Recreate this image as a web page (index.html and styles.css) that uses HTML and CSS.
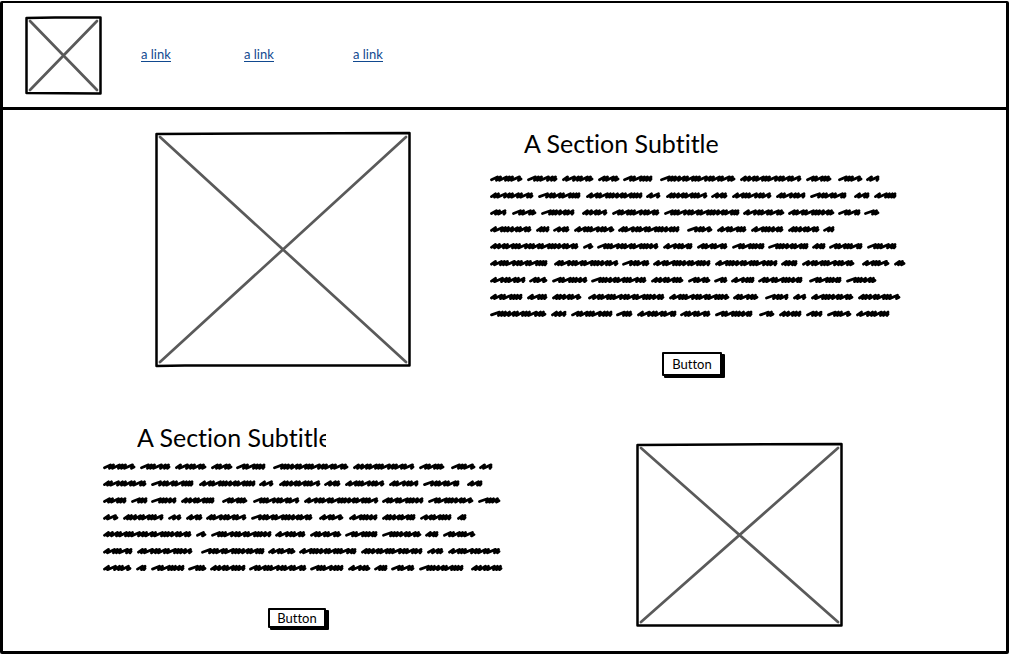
FILE: index.html
```html
<!DOCTYPE html>
<html lang="en">
<head>
<meta charset="utf-8">
<title>Wireframe</title>
<link rel="stylesheet" href="styles.css">
</head>
<body>
<div class="frame">
  <header class="header">
    <svg class="logo" viewBox="0 0 77 79" role="img" aria-label="Logo placeholder">
      <path class="box" d="M1.5 2 30 1.5 75.500 1.500 75.500 77.500 1.500 77Z"/>
      <path class="cross" d="M5 5 72 74M72 5 5 74"/>
    </svg>
    <nav class="nav">
      <a href="#">a link</a>
      <a href="#">a link</a>
      <a href="#">a link</a>
    </nav>
  </header>
  <main class="main">
    <section class="section section-first">
      <svg class="picture" viewBox="0 0 256 235" role="img" aria-label="Image placeholder">
        <path class="box" d="M1.500 2 110 1.500 254.500 1 254.500 233.500 30 233.500 1.500 234Z"/>
        <path class="cross" d="M5 5 251 230M251 5 5 230"/>
      </svg>
      <div class="copy">
        <h2 class="title">A Section Subtitle</h2>
        <svg class="scribble" viewBox="0 0 416 145" data-text="first" aria-hidden="true"></svg>
        <button class="button" type="button">Button</button>
      </div>
    </section>
    <section class="section section-second">
      <div class="copy">
        <h2 class="title title-cut">A Section Subtitle</h2>
        <svg class="scribble" viewBox="0 0 400 111" data-text="second" aria-hidden="true"></svg>
        <button class="button" type="button">Button</button>
      </div>
      <svg class="picture" viewBox="0 0 207 184" role="img" aria-label="Image placeholder">
        <path class="box" d="M1.500 2 90 1.500 205.500 1 205.500 182.500 1.500 182.500Z"/>
        <path class="cross" d="M5 5 202 179M202 5 5 179"/>
      </svg>
    </section>
  </main>
</div>
<script src="scribble.js"></script>
</body>
</html>
```

FILE: styles.css
```css
* { box-sizing: border-box; }

body {
  margin: 0;
  background: #fff;
  color: #000;
  font-family: Lato, "Open Sans", sans-serif;
  font-variant-ligatures: none;
}

.frame {
  display: flex;
  flex-direction: column;
  min-height: calc(100vh - 1px);
  margin: 1px 0 0;
  border: 3px solid #000;
  border-top-width: 2px;
  border-radius: 2px;
}

.header {
  display: flex;
  align-items: center;
  gap: 39px;
  padding: 13px 22px 12px;
  border-bottom: 3px solid #000;
}

.logo {
  display: block;
  width: 77px;
  height: 79px;
}

.nav {
  display: grid;
  grid-template-columns: 103px 109px auto;
  padding-bottom: 2px;
  font-size: 13px;
  line-height: 14px;
}

.nav a {
  justify-self: start;
  color: #11498f;
  text-decoration: none;
  border-bottom: 1px solid #11498f;
}

.box {
  fill: none;
  stroke: #000;
  stroke-width: 2.5;
  stroke-linejoin: round;
}

.cross {
  fill: none;
  stroke: #5a5a5a;
  stroke-width: 2.7;
  stroke-linecap: round;
}

.main {
  flex: 1;
  padding-top: 22px;
}

.section {
  display: grid;
  align-items: start;
}

.section-first { grid-template-columns: 152fr 256fr 79fr 416fr 100fr; }
.section-first .picture { grid-column: 2; }
.section-first .copy { grid-column: 4; }

.section-second {
  grid-template-columns: 100fr 400fr 133fr 207fr 163fr;
  padding-top: 49px;
}
.section-second .copy { grid-column: 2; }
.section-second .picture {
  grid-column: 4;
  margin-top: 18px;
}

.picture,
.scribble {
  display: block;
  width: 100%;
  overflow: visible;
}

.copy {
  display: flex;
  flex-direction: column;
}

.title {
  margin: 0 0 0 34px;
  font-size: 25px;
  line-height: 22px;
  font-weight: 400;
  white-space: nowrap;
}

.section-first .scribble { margin: 20px 0 33px; }
.section-second .scribble { margin: 13px 0 35px; }

.title-cut {
  width: 189px;
  line-height: 24px;
  overflow: hidden;
}

.squiggle {
  fill: none;
  stroke: #000;
  stroke-width: 2.8;
  stroke-linecap: round;
  stroke-linejoin: round;
}

.button {
  width: 60px;
  height: 24px;
  margin-left: 172px;
  padding: 0;
  border: 2px solid #000;
  border-radius: 1px;
  background: #fff;
  box-shadow: 2px 2px 0 #000, 3px 2px 0 #000;
  color: #000;
  font: inherit;
  font-size: 13px;
  line-height: 16px;
}

.section-second .button {
  width: 58px;
  height: 20px;
  margin-left: 165px;
}
```

FILE: scribble.js
```javascript
// Each line lists the start and end of every scribbled word.
const texts = {
  first: [
    [0,32,37,67,72,103,108,129,133,162,170,245,250,311,316,341,348,372,376,389],
    [0,43,48,90,96,152,156,170,176,217,221,237,242,281,286,315,320,356,364,379,384,406],
    [0,16,22,46,51,84,92,117,122,169,174,249,253,294,298,344,348,370,374,389],
    [0,41,46,59,63,79,84,124,128,189,197,222,227,256,261,293,298,329,333,344],
    [0,88,93,103,107,168,173,202,207,237,242,274,278,318,322,335,339,372,377,406],
    [0,57,64,128,132,159,163,220,225,287,291,307,312,364,372,399,404,415],
    [0,35,39,57,62,97,101,156,161,193,198,220,224,237,241,264,268,312,319,351,356,386],
    [0,32,37,57,62,91,98,174,179,239,243,268,275,298,303,316,321,363,368,410],
    [0,56,61,76,81,122,126,142,147,186,190,220,225,262,269,284,289,311,316,332,337,361,366,399]
  ],
  second: [
    [0,32,37,67,72,103,108,129,133,162,170,245,250,311,316,341,348,372,376,389],
    [0,43,48,90,96,152,156,170,176,217,221,237,242,281,286,315,320,356,364,379],
    [0,23,28,44,48,73,78,111,119,144,150,196,201,275,279,320,325,370,375,397],
    [0,15,20,60,65,78,83,99,103,143,148,209,216,240,246,274,279,312,317,348,354,363],
    [0,88,93,103,108,168,172,202,207,238,242,274,279,318,322,335,340,372],
    [0,29,34,89,98,161,165,192,196,253,258,319,324,340,345,397],
    [0,28,33,43,48,81,85,103,107,142,146,203,207,240,245,267,271,284,288,311,316,360,368,399]
  ]
};

const steps = [6, 4, 7, 4, 4, 8, 5, 4, 7, 4, 8, 4, 4, 5];
const lineHeight = 16.9;

document.querySelectorAll(".scribble").forEach((svg) => {
  let d = "";
  texts[svg.dataset.text].forEach((line, row) => {
    const y = 4.5 + row * lineHeight;
    for (let i = 0; i < line.length; i += 2) {
      const end = line[i + 1] - 1;
      let x = line[i] + 1.5;
      let n = row * 3 + i;
      d += `M${x} ${y + 1.2}`;
      while (x + 3 < end) {
        const step = steps[n % steps.length];
        const peak = Math.min(x + step, end);
        d += `L${peak} ${y - 1.6}L${peak - 1} ${y + 1.8}`;
        x = peak - 1;
        n += 1;
      }
      d += `L${end} ${y + 0.5}`;
    }
  });
  const path = document.createElementNS("http://www.w3.org/2000/svg", "path");
  path.setAttribute("class", "squiggle");
  path.setAttribute("d", d);
  svg.append(path);
});
```
